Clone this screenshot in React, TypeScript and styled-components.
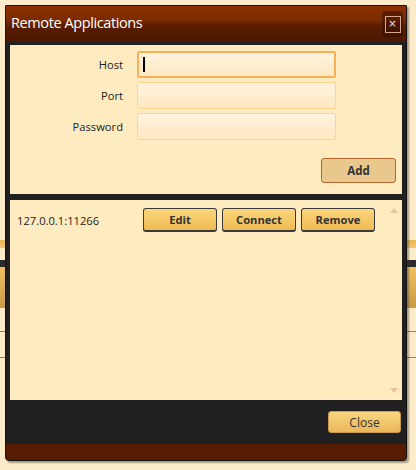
import React from "react";
import styled, { createGlobalStyle } from "styled-components";

const GlobalStyle = createGlobalStyle`
  html, body { margin: 0; padding: 0; }
  body {
    background: #fcecca;
    font-family: "Open Sans", "Noto Sans", sans-serif;
    width: 416px;
    height: 470px;
    overflow: hidden;
  }
`;

const Desktop = styled.div`
  position: relative;
  width: 416px;
  height: 470px;
  background: #fcecca;
`;

/* Background application partially hidden behind the dialog */
const BackApp = styled.div`
  display: flex;
  flex-direction: column;
  padding-top: 240px;
`;

const BackStrip = styled.div<{ $h: number; $bg: string }>`
  height: ${(p) => p.$h}px;
  background: ${(p) => p.$bg};
`;

const BackLine = styled.div`
  height: 1px;
  background: #8a8070;
`;

const Window = styled.div`
  position: absolute;
  left: 5px;
  top: 5px;
  width: 400px;
  height: 454px;
  border: 1px solid #141414;
  border-radius: 1px 1px 4px 4px;
  background: #202020;
  box-shadow: 2px 2px 2px rgba(60, 50, 40, 0.45);
  display: flex;
  flex-direction: column;
  overflow: hidden;
`;

const TitleBar = styled.div`
  height: 36px;
  flex: none;
  display: flex;
  align-items: center;
  justify-content: space-between;
  padding: 0 3px 0 5px;
  background: linear-gradient(
    #8d3200 0%,
    #7a2a00 40%,
    #5a1d00 55%,
    #4b1800 100%
  );
`;

const Title = styled.span`
  color: #ffffff;
  font-size: 14.5px;
  letter-spacing: -0.4px;
  line-height: 20px;
  padding-bottom: 2px;
`;

const CloseControl = styled.div`
  width: 21px;
  height: 26px;
  border-radius: 4px;
  background: rgba(40, 10, 0, 0.45);
  display: flex;
  align-items: center;
  justify-content: center;
`;

const CloseBox = styled.div`
  width: 14px;
  height: 15px;
  border: 1px solid #d4a88c;
  display: flex;
  align-items: center;
  justify-content: center;
  color: #f4e6dc;
  font-size: 10px;
  line-height: 10px;
  font-family: "DejaVu Sans", sans-serif;
`;

const Body = styled.div`
  flex: 1;
  display: flex;
  flex-direction: column;
  gap: 6px;
  padding: 3px 4px 0 4px;
`;

const Panel = styled.div`
  background: #ffebc0;
`;

const FormPanel = styled(Panel)`
  height: 149px;
  flex: none;
  padding: 6px 6px 0 0;
  box-sizing: border-box;
  display: flex;
  flex-direction: column;
`;

const FormGrid = styled.div`
  display: grid;
  grid-template-columns: 113px 199px;
  grid-auto-rows: 27px;
  column-gap: 14px;
  row-gap: 4px;
  align-items: center;
`;

const Label = styled.label`
  text-align: right;
  font-size: 11.2px;
  color: #222;
`;

const Field = styled.div<{ $focused?: boolean }>`
  height: 27px;
  box-sizing: border-box;
  border: ${(p) => (p.$focused ? "2px solid #f6b058" : "1px solid #ffd58c")};
  border-radius: 2px;
  background: linear-gradient(#fff3de, #ffe8c2);
  display: flex;
  align-items: center;
  padding-left: ${(p) => (p.$focused ? "4px" : "5px")};
`;

const Caret = styled.span`
  width: 2px;
  height: 15px;
  background: #000;
`;

const AddRow = styled.div`
  display: flex;
  justify-content: flex-end;
  margin-top: 18px;
`;

const AddButton = styled.button`
  width: 75px;
  height: 25px;
  border: 1px solid #b4642e;
  border-radius: 3px;
  background: #e8c88c;
  font-family: inherit;
  font-weight: 700;
  font-size: 11.5px;
  color: #333;
  padding: 0;
`;

const ListPanel = styled(Panel)`
  flex: 1;
  display: flex;
`;

const ListContent = styled.div`
  flex: 1;
  padding: 8px 0 0 7px;
`;

const ItemRow = styled.div`
  display: grid;
  grid-template-columns: 126px auto;
  align-items: center;
`;

const ItemText = styled.span`
  font-size: 11.2px;
  color: #222;
`;

const ButtonGroup = styled.div`
  display: flex;
  gap: 5px;
`;

const ItemButton = styled.button`
  width: 74px;
  height: 24px;
  box-sizing: border-box;
  border: 1px solid #3a3a3a;
  border-bottom-width: 2px;
  border-radius: 3px;
  background: linear-gradient(#fbd67a, #efbb55);
  font-family: inherit;
  font-weight: 700;
  font-size: 11.2px;
  color: #333;
  padding: 0;
`;

const ScrollBar = styled.div`
  width: 16px;
  display: flex;
  flex-direction: column;
  justify-content: space-between;
  align-items: center;
  padding: 8px 0 7px;
`;

const Arrow = styled.div<{ $down?: boolean }>`
  width: 0;
  height: 0;
  border-left: 4px solid transparent;
  border-right: 4px solid transparent;
  ${(p) =>
    p.$down
      ? "border-top: 5px solid #e8c49a;"
      : "border-bottom: 5px solid #e8c49a;"}
`;

const Footer = styled.div`
  height: 44px;
  flex: none;
  display: flex;
  justify-content: flex-end;
  align-items: center;
  padding-right: 5px;
`;

const CloseButton = styled.button`
  width: 73px;
  height: 22px;
  border: 1px solid #c89a4e;
  border-radius: 3px;
  background: linear-gradient(#f9d680, #e9b75b);
  font-family: inherit;
  font-size: 12px;
  color: #333;
  padding: 0;
`;

const BottomBar = styled.div`
  height: 16px;
  flex: none;
  background: #561c00;
`;

export default function App() {
  return (
    <>
      <GlobalStyle />
      <Desktop>
        <BackApp>
          <BackStrip $h={8} $bg="linear-gradient(#e8b450, #f4c870)" />
          <BackStrip $h={12} $bg="#fcecca" />
          <BackStrip $h={7} $bg="#2a2a2a" />
          <BackStrip $h={41} $bg="linear-gradient(#f0c060, #c89a48)" />
          <BackStrip $h={23} $bg="#fcecca" />
          <BackLine />
          <BackStrip $h={25} $bg="#fcecca" />
          <BackLine />
        </BackApp>
        <Window>
          <TitleBar>
            <Title>Remote Applications</Title>
            <CloseControl>
              <CloseBox>×</CloseBox>
            </CloseControl>
          </TitleBar>
          <Body>
            <FormPanel>
              <FormGrid>
                <Label>Host</Label>
                <Field $focused>
                  <Caret />
                </Field>
                <Label>Port</Label>
                <Field />
                <Label>Password</Label>
                <Field />
              </FormGrid>
              <AddRow>
                <AddButton>Add</AddButton>
              </AddRow>
            </FormPanel>
            <ListPanel>
              <ListContent>
                <ItemRow>
                  <ItemText>127.0.0.1:11266</ItemText>
                  <ButtonGroup>
                    <ItemButton>Edit</ItemButton>
                    <ItemButton>Connect</ItemButton>
                    <ItemButton>Remove</ItemButton>
                  </ButtonGroup>
                </ItemRow>
              </ListContent>
              <ScrollBar>
                <Arrow />
                <Arrow $down />
              </ScrollBar>
            </ListPanel>
          </Body>
          <Footer>
            <CloseButton>Close</CloseButton>
          </Footer>
          <BottomBar />
        </Window>
      </Desktop>
    </>
  );
}
